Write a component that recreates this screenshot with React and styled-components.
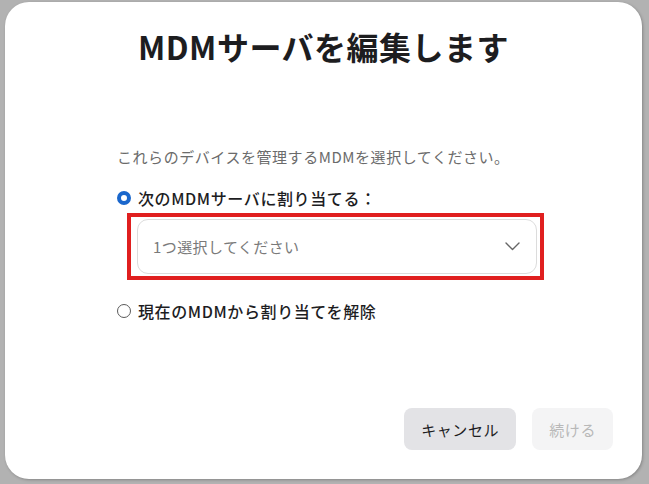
import React, { useState } from "react";
import styled, { createGlobalStyle } from "styled-components";

const Global = createGlobalStyle`
  html, body { margin: 0; padding: 0; }
  body {
    background: #b2b2b2;
    font-family: "Noto Sans CJK JP", "Noto Sans", sans-serif;
  }
  * { box-sizing: border-box; }
`;

const Page = styled.div`
  width: 649px;
  height: 484px;
  padding: 2px 7px 5px 5px;
  background: #b2b2b2;
`;

const Card = styled.div`
  height: 100%;
  background: #ffffff;
  border-radius: 24px;
  box-shadow: 1px 1px 3px rgba(0, 0, 0, 0.25);
  display: flex;
  flex-direction: column;
  padding: 23px 29px 29px 0;
`;

const Title = styled.h1`
  margin: 0;
  padding-left: 29px;
  text-align: center;
  font-size: 32px;
  line-height: 42px;
  font-weight: 700;
  letter-spacing: 0.5px;
  color: #1d1d1f;
`;

const Body = styled.div`
  padding-left: 112px;
  display: flex;
  flex-direction: column;
  margin-top: 79px;
`;

const Description = styled.p`
  margin: 0;
  font-size: 15px;
  line-height: 22px;
  letter-spacing: 0.55px;
  color: #6b6b6b;
`;

const RadioRow = styled.label`
  display: flex;
  align-items: center;
  gap: 7px;
  margin-top: ${(p) => p.$mt}px;
  font-size: 16px;
  line-height: 24px;
  font-weight: 500;
  letter-spacing: 0.6px;
  color: #1d1d1f;
  cursor: pointer;
`;

const RadioDot = styled.span`
  width: 14px;
  height: 14px;
  border-radius: 50%;
  flex: none;
  border: ${(p) => (p.$checked ? "4.5px solid #1a67cc" : "1.5px solid #5a5a5a")};
  background: #fff;
`;

const Highlight = styled.div`
  margin: 3px 0 0 10px;
  width: 417px;
  border: 4px solid #e01f1f;
  padding: 2px 3px 2px 6px;
`;

const Select = styled.div`
  height: 55px;
  border: 1px solid #dcdcdc;
  border-radius: 11px;
  display: flex;
  align-items: center;
  justify-content: space-between;
  padding: 0 16px 0 15px;
  font-size: 15px;
  letter-spacing: 0.4px;
  color: #7a7a7a;
`;

const Footer = styled.div`
  margin-top: auto;
  display: flex;
  justify-content: flex-end;
  gap: 16px;
`;

const Button = styled.button`
  height: 42px;
  padding: 0 17px;
  border: none;
  border-radius: 8px;
  font-family: inherit;
  font-size: 15px;
  letter-spacing: 0.6px;
  background: ${(p) => (p.$disabled ? "#f4f4f5" : "#e3e3e6")};
  color: ${(p) => (p.$disabled ? "#b8b8b8" : "#1d1d1f")};
`;

export default function App() {
  const [choice, setChoice] = useState("assign");
  return (
    <>
      <Global />
      <Page>
        <Card>
          <Title>MDMサーバを編集します</Title>
          <Body>
            <Description>これらのデバイスを管理するMDMを選択してください。</Description>
            <RadioRow $mt={18} onClick={() => setChoice("assign")}>
              <RadioDot $checked={choice === "assign"} />
              次のMDMサーバに割り当てる：
            </RadioRow>
            <Highlight>
              <Select>
                <span>1つ選択してください</span>
                <svg width="15" height="9" viewBox="0 0 15 9" fill="none">
                  <path d="M1 1l6.5 6.5L14 1" stroke="#666" strokeWidth="1.4" strokeLinecap="round" strokeLinejoin="round" />
                </svg>
              </Select>
            </Highlight>
            <RadioRow $mt={19} onClick={() => setChoice("remove")}>
              <RadioDot $checked={choice === "remove"} />
              現在のMDMから割り当てを解除
            </RadioRow>
          </Body>
          <Footer>
            <Button>キャンセル</Button>
            <Button $disabled disabled>続ける</Button>
          </Footer>
        </Card>
      </Page>
    </>
  );
}
